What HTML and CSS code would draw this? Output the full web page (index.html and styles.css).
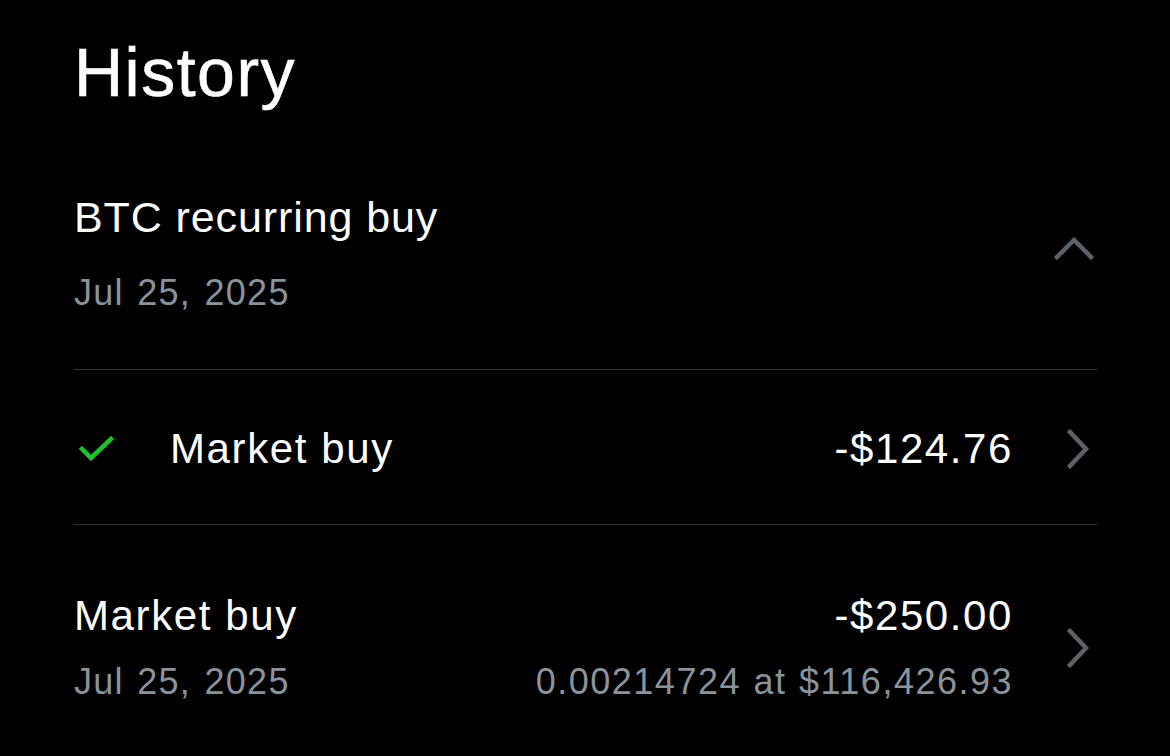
FILE: index.html
```html
<!DOCTYPE html>
<html lang="en">
<head>
<meta charset="utf-8">
<title>History</title>
<link rel="stylesheet" href="styles.css">
</head>
<body>
<main class="screen">
  <h1 class="title">History</h1>

  <section class="group">
    <div class="group-head">
      <div class="stack">
        <div class="heading">BTC recurring buy</div>
        <div class="secondary date">Jul 25, 2025</div>
      </div>
      <svg class="chev-up" width="42" height="26" viewBox="0 0 42 26" aria-hidden="true">
        <path d="M4 21 L21 4 L38 21" fill="none" stroke="#5b6166" stroke-width="4.5" stroke-linecap="square"/>
      </svg>
    </div>

    <div class="row row-sub">
      <div class="sub-left">
        <svg class="check" width="40" height="30" viewBox="0 0 40 30" aria-hidden="true">
          <path d="M8 15 L17 24 L37 5" fill="none" stroke="#1fc22b" stroke-width="4.5" stroke-linecap="square"/>
        </svg>
        <span class="primary">Market buy</span>
      </div>
      <div class="primary amount">-$124.76</div>
      <svg class="chev-right" width="24" height="40" viewBox="0 0 24 40" aria-hidden="true">
        <path d="M4 3 L20 20 L4 37" fill="none" stroke="#5b6166" stroke-width="4.5" stroke-linecap="square"/>
      </svg>
    </div>
  </section>

  <div class="row row-main">
    <div class="stack stack-left">
      <div class="primary">Market buy</div>
      <div class="secondary date">Jul 25, 2025</div>
    </div>
    <div class="stack stack-right">
      <div class="primary amount">-$250.00</div>
      <div class="secondary">0.00214724 at $116,426.93</div>
    </div>
    <svg class="chev-right" width="24" height="40" viewBox="0 0 24 40" aria-hidden="true">
      <path d="M4 3 L20 20 L4 37" fill="none" stroke="#5b6166" stroke-width="4.5" stroke-linecap="square"/>
    </svg>
  </div>
</main>
</body>
</html>
```

FILE: styles.css
```css
html, body {
  margin: 0;
  padding: 0;
  background: #000;
}

body {
  font-family: "Liberation Sans", Arial, sans-serif;
  color: #fff;
  height: 756px;
  overflow: hidden;
}

.screen {
  padding: 32px 73px 0 74px;
}

.title {
  margin: 0;
  font-size: 68px;
  line-height: 80px;
  font-weight: 400;
  letter-spacing: 1.5px;
  -webkit-text-stroke: 0.6px #fff;
}

.group-head {
  display: flex;
  align-items: center;
  justify-content: space-between;
  padding: 79px 0 54px;
}

.stack {
  display: flex;
  flex-direction: column;
  gap: 19px;
  white-space: nowrap;
}

.group-head .stack {
  gap: 28px;
}

.heading {
  font-size: 43px;
  line-height: 52px;
  letter-spacing: 0.9px;
}

.primary {
  font-size: 42px;
  line-height: 50px;
  letter-spacing: 1.6px;
  white-space: nowrap;
}

.secondary {
  font-size: 36px;
  line-height: 44px;
  letter-spacing: 1.5px;
  word-spacing: 1px;
  color: #8a939b;
}

.date {
  letter-spacing: 1.3px;
  word-spacing: 2px;
}

.row {
  display: flex;
  align-items: center;
  border-top: 1px solid #333;
}

.row-sub {
  padding: 54px 0 50px;
}

.row-main {
  padding-top: 66px;
}

.sub-left {
  display: flex;
  align-items: center;
  gap: 56px;
  flex: 1;
}

.check {
  display: block;
}

.amount {
  text-align: right;
}

.stack-left {
  flex: 1;
}

.stack-right {
  flex: none;
  align-items: flex-end;
}

.chev-right {
  display: block;
  flex: none;
  margin: 0 7px 0 53px;
}

.chev-up {
  display: block;
  margin: 0 2px 8px 0;
}
```
